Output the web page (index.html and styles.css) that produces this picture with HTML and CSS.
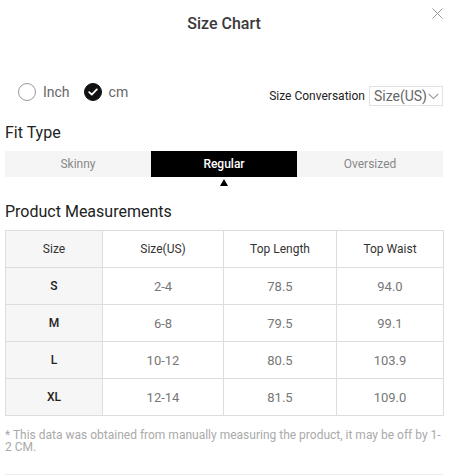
FILE: index.html
```html
<!DOCTYPE html>
<html>
<head>
<meta charset="utf-8">
<link rel="stylesheet" href="styles.css">
</head>
<body>
<div class="modal">
  <div class="header">
    <h1 class="title">Size Chart</h1>
    <span class="close">
      <svg width="11" height="11" viewBox="0 0 11 11"><path d="M0.5 0.5L10.5 10.5M10.5 0.5L0.5 10.5" stroke="#999" stroke-width="1" fill="none"/></svg>
    </span>
  </div>
  <div class="unit-row">
    <div class="units">
      <label class="unit"><span class="radio"></span><span class="unit-text">Inch</span></label>
      <label class="unit"><span class="radio checked"><svg width="10" height="8" viewBox="0 0 10 8"><path d="M1.2 4.2L3.8 6.6L8.8 1.4" stroke="#fff" stroke-width="1.8" fill="none" stroke-linecap="round" stroke-linejoin="round"/></svg></span><span class="unit-text">cm</span></label>
    </div>
    <div class="conversion">
      <span class="conv-label">Size Conversation</span>
      <span class="select">Size(US)<svg class="chev" width="11" height="7" viewBox="0 0 11 7"><path d="M0.8 1L5.5 5.6L10.2 1" stroke="#999" stroke-width="1.1" fill="none"/></svg></span>
    </div>
  </div>
  <h2 class="section">Fit Type</h2>
  <div class="tabs">
    <div class="tab">Skinny</div>
    <div class="tab active">Regular</div>
    <div class="tab">Oversized</div>
  </div>
  <div class="pointer-row">
    <div class="pointer-cell"></div>
    <div class="pointer-cell"><span class="pointer"></span></div>
    <div class="pointer-cell"></div>
  </div>
  <h2 class="section">Product Measurements</h2>
  <table class="chart">
    <colgroup><col class="c1"><col class="c2"><col class="c3"><col class="c4"></colgroup>
    <tr class="head"><th class="size">Size</th><th>Size(US)</th><th>Top Length</th><th>Top Waist</th></tr>
    <tr><th class="size">S</th><td>2-4</td><td>78.5</td><td>94.0</td></tr>
    <tr><th class="size">M</th><td>6-8</td><td>79.5</td><td>99.1</td></tr>
    <tr><th class="size">L</th><td>10-12</td><td>80.5</td><td>103.9</td></tr>
    <tr><th class="size">XL</th><td>12-14</td><td>81.5</td><td>109.0</td></tr>
  </table>
  <p class="note">* This data was obtained from manually measuring the product, it may be off by 1-2 CM.</p>
  <div class="divider"></div>
</div>
</body>
</html>
```
FILE: styles.css
```css
* { box-sizing: border-box; }
html, body { margin: 0; padding: 0; background: #fff; }
body { font-family: Roboto, "Liberation Sans", Arial, sans-serif; color: #222; }
.modal { width: 449px; padding: 0 6px 0 5px; }
.header { position: relative; height: 46px; display: flex; align-items: center; justify-content: center; }
.title { margin: 0; font-size: 16px; font-weight: 500; color: #3a3a3a; }
.close { position: absolute; top: 8px; right: 0; display: block; line-height: 0; }
.unit-row { margin-top: 34px; height: 26px; display: flex; justify-content: space-between; }
.units { display: flex; align-items: center; height: 24px; padding-left: 13px; gap: 14px; }
.unit { display: flex; align-items: center; gap: 7px; }
.radio { width: 18px; height: 18px; border-radius: 50%; border: 1px solid #999; display: flex; align-items: center; justify-content: center; }
.radio.checked { background: #111; border-color: #111; }
.unit-text { font-size: 14px; color: #666; }
.conversion { align-self: flex-end; display: flex; align-items: center; gap: 4px; height: 20px; }
.conv-label { font-size: 12px; color: #222; }
.select { display: flex; align-items: center; height: 20px; padding: 0 3px 0 4px; border: 1px solid #e2e2e2; font-size: 14px; color: #666; gap: 1px; }
.chev { margin-top: 1px; }
.section { margin: 16px 0 0; font-size: 16px; font-weight: 400; line-height: 22px; color: #222; }
.tabs { margin-top: 7px; display: flex; background: #f5f5f5; height: 26px; }
.tab { flex: 1; display: flex; align-items: center; justify-content: center; font-size: 12px; color: #888; }
.tab.active { background: #000; color: #fff; font-weight: 500; }
.pointer-row { display: flex; height: 24px; }
.pointer-cell { flex: 1; display: flex; justify-content: center; }
.pointer { margin-top: 2px; width: 0; height: 0; border-left: 4px solid transparent; border-right: 4px solid transparent; border-bottom: 7px solid #000; }
.pointer-row + .section { margin-top: 0; }
.chart { margin-top: 7px; width: 438px; border-collapse: collapse; table-layout: fixed; }
.c1 { width: 97px; } .c2 { width: 121px; } .c3 { width: 113px; } .c4 { width: 107px; }
.chart th, .chart td { height: 37px; border: 1px solid #ddd; text-align: center; padding: 0; }
.chart th { font-size: 12px; font-weight: 400; color: #333; }
.chart th.size { background: #f6f6f6; font-weight: 500; color: #222; }
.chart .head th.size { font-weight: 400; color: #333; }
.chart td { font-size: 13px; color: #777; }
.note { margin: 13px 0 0; font-size: 12px; line-height: 12px; color: #aaa; }
.divider { margin-top: 21px; height: 1px; background: #eee; }
```
